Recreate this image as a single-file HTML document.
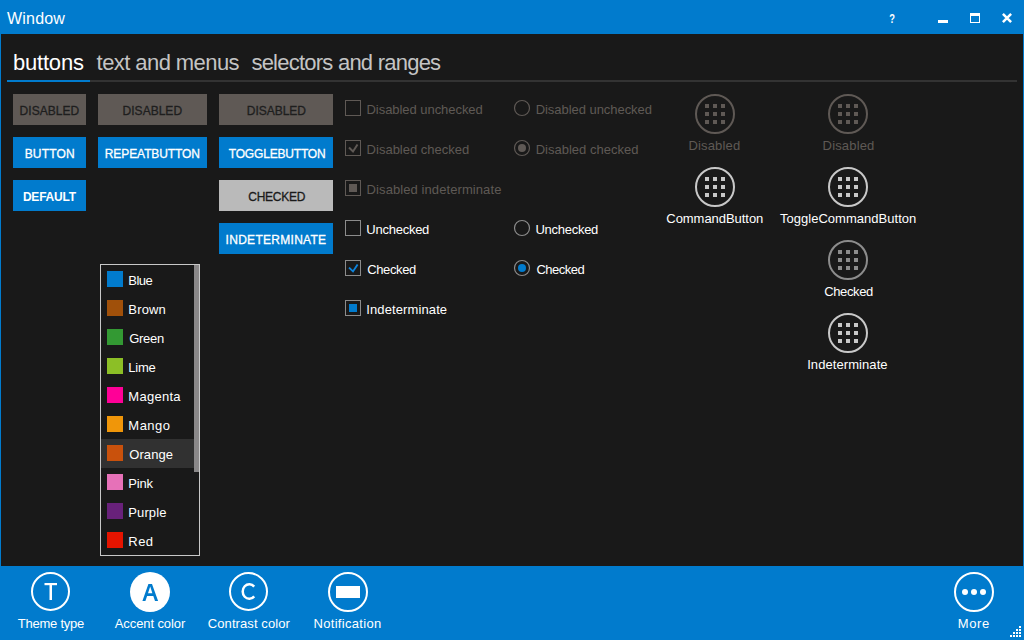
<!DOCTYPE html>
<html><head><meta charset="utf-8"><title>Window</title>
<style>
html,body{margin:0;padding:0;width:1024px;height:640px;overflow:hidden;background:#191919;}
.r{position:absolute;}
.t{position:absolute;white-space:nowrap;font-family:"Liberation Sans",sans-serif;}
svg{position:absolute;left:0;top:0;}
</style></head><body>
<div class="r" style="left:0px;top:0px;width:1024px;height:640px;background:#017bcd;"></div><div class="r" style="left:1px;top:34px;width:1022px;height:532px;background:#191919;"></div><div class="r" style="left:90px;top:80px;width:927px;height:2px;background:#333333;"></div><div class="r" style="left:7px;top:80px;width:83px;height:2px;background:#017bcd;"></div><div class="r" style="left:13px;top:94px;width:73px;height:31px;background:#5f5955;"></div><div class="r" style="left:98px;top:94px;width:109px;height:31px;background:#5f5955;"></div><div class="r" style="left:219px;top:94px;width:114px;height:31px;background:#5f5955;"></div><div class="r" style="left:13px;top:137px;width:73px;height:31px;background:#017bcd;"></div><div class="r" style="left:98px;top:137px;width:109px;height:31px;background:#017bcd;"></div><div class="r" style="left:219px;top:137px;width:114px;height:31px;background:#017bcd;"></div><div class="r" style="left:13px;top:180px;width:73px;height:31px;background:#017bcd;"></div><div class="r" style="left:219px;top:180px;width:114px;height:31px;background:#bababa;"></div><div class="r" style="left:219px;top:223px;width:114px;height:31px;background:#017bcd;"></div><div class="r" style="left:100px;top:264px;width:100px;height:292px;background:#c8c8c8;"></div><div class="r" style="left:101px;top:265px;width:98px;height:290px;background:#191919;"></div><div class="r" style="left:101px;top:439px;width:93px;height:29px;background:#313131;"></div><div class="r" style="left:194px;top:265px;width:5px;height:207px;background:#8a8889;"></div><div class="r" style="left:107px;top:271px;width:16px;height:16px;background:#017bcd;"></div><div class="r" style="left:107px;top:300px;width:16px;height:16px;background:#a0500a;"></div><div class="r" style="left:107px;top:329px;width:16px;height:16px;background:#339933;"></div><div class="r" style="left:107px;top:358px;width:16px;height:16px;background:#8cbf26;"></div><div class="r" style="left:107px;top:387px;width:16px;height:16px;background:#ff0097;"></div><div class="r" style="left:107px;top:416px;width:16px;height:16px;background:#f09609;"></div><div class="r" style="left:107px;top:445px;width:16px;height:16px;background:#c9510c;"></div><div class="r" style="left:107px;top:474px;width:16px;height:16px;background:#e671b8;"></div><div class="r" style="left:107px;top:503px;width:16px;height:16px;background:#68217a;"></div><div class="r" style="left:107px;top:532px;width:16px;height:16px;background:#e51400;"></div>
<svg width="1024" height="640" viewBox="0 0 1024 640">
<rect x="345.5" y="100.5" width="15" height="15" fill="none" stroke="#5f5955" stroke-width="1"/><rect x="345.5" y="140.5" width="15" height="15" fill="none" stroke="#5f5955" stroke-width="1"/><path d="M349 147.5 L353 151.5 L357.5 144.5" fill="none" stroke="#5f5955" stroke-width="2"/><rect x="345.5" y="180.5" width="15" height="15" fill="none" stroke="#5f5955" stroke-width="1"/><rect x="349" y="184" width="8" height="8" fill="#5f5955"/><rect x="345.5" y="220.5" width="15" height="15" fill="none" stroke="#8c8c8c" stroke-width="1"/><rect x="345.5" y="260.5" width="15" height="15" fill="none" stroke="#8c8c8c" stroke-width="1"/><path d="M349 267.6 L353 271.4 L357.6 264.4" fill="none" stroke="#0e84dc" stroke-width="1.9"/><rect x="345.5" y="300.5" width="15" height="15" fill="none" stroke="#8c8c8c" stroke-width="1"/><rect x="349" y="304" width="8" height="8" fill="#017bcd"/><circle cx="522" cy="108" r="7.5" fill="none" stroke="#5f5955" stroke-width="1.2"/><circle cx="522" cy="148" r="7.5" fill="none" stroke="#5f5955" stroke-width="1.2"/><circle cx="522" cy="148" r="4" fill="#5f5955"/><circle cx="522" cy="228" r="7.5" fill="none" stroke="#8c8c8c" stroke-width="1.2"/><circle cx="522" cy="268" r="7.5" fill="none" stroke="#8c8c8c" stroke-width="1.2"/><circle cx="522" cy="268" r="4" fill="#017bcd"/><circle cx="715" cy="114" r="19" fill="none" stroke="#5f5955" stroke-width="2"/><rect x="705" y="104" width="4" height="4" fill="#5f5955"/><rect x="705" y="112" width="4" height="4" fill="#5f5955"/><rect x="705" y="120" width="4" height="4" fill="#5f5955"/><rect x="713" y="104" width="4" height="4" fill="#5f5955"/><rect x="713" y="112" width="4" height="4" fill="#5f5955"/><rect x="713" y="120" width="4" height="4" fill="#5f5955"/><rect x="721" y="104" width="4" height="4" fill="#5f5955"/><rect x="721" y="112" width="4" height="4" fill="#5f5955"/><rect x="721" y="120" width="4" height="4" fill="#5f5955"/><circle cx="715" cy="187" r="19" fill="none" stroke="#c8c8c8" stroke-width="2"/><rect x="705" y="177" width="4" height="4" fill="#c8c8c8"/><rect x="705" y="185" width="4" height="4" fill="#c8c8c8"/><rect x="705" y="193" width="4" height="4" fill="#c8c8c8"/><rect x="713" y="177" width="4" height="4" fill="#c8c8c8"/><rect x="713" y="185" width="4" height="4" fill="#c8c8c8"/><rect x="713" y="193" width="4" height="4" fill="#c8c8c8"/><rect x="721" y="177" width="4" height="4" fill="#c8c8c8"/><rect x="721" y="185" width="4" height="4" fill="#c8c8c8"/><rect x="721" y="193" width="4" height="4" fill="#c8c8c8"/><circle cx="848" cy="114" r="19" fill="none" stroke="#5f5955" stroke-width="2"/><rect x="838" y="104" width="4" height="4" fill="#5f5955"/><rect x="838" y="112" width="4" height="4" fill="#5f5955"/><rect x="838" y="120" width="4" height="4" fill="#5f5955"/><rect x="846" y="104" width="4" height="4" fill="#5f5955"/><rect x="846" y="112" width="4" height="4" fill="#5f5955"/><rect x="846" y="120" width="4" height="4" fill="#5f5955"/><rect x="854" y="104" width="4" height="4" fill="#5f5955"/><rect x="854" y="112" width="4" height="4" fill="#5f5955"/><rect x="854" y="120" width="4" height="4" fill="#5f5955"/><circle cx="848" cy="187" r="19" fill="none" stroke="#c8c8c8" stroke-width="2"/><rect x="838" y="177" width="4" height="4" fill="#c8c8c8"/><rect x="838" y="185" width="4" height="4" fill="#c8c8c8"/><rect x="838" y="193" width="4" height="4" fill="#c8c8c8"/><rect x="846" y="177" width="4" height="4" fill="#c8c8c8"/><rect x="846" y="185" width="4" height="4" fill="#c8c8c8"/><rect x="846" y="193" width="4" height="4" fill="#c8c8c8"/><rect x="854" y="177" width="4" height="4" fill="#c8c8c8"/><rect x="854" y="185" width="4" height="4" fill="#c8c8c8"/><rect x="854" y="193" width="4" height="4" fill="#c8c8c8"/><circle cx="848" cy="260" r="19" fill="none" stroke="#8c8c8c" stroke-width="2"/><rect x="838" y="250" width="4" height="4" fill="#8c8c8c"/><rect x="838" y="258" width="4" height="4" fill="#8c8c8c"/><rect x="838" y="266" width="4" height="4" fill="#8c8c8c"/><rect x="846" y="250" width="4" height="4" fill="#8c8c8c"/><rect x="846" y="258" width="4" height="4" fill="#8c8c8c"/><rect x="846" y="266" width="4" height="4" fill="#8c8c8c"/><rect x="854" y="250" width="4" height="4" fill="#8c8c8c"/><rect x="854" y="258" width="4" height="4" fill="#8c8c8c"/><rect x="854" y="266" width="4" height="4" fill="#8c8c8c"/><circle cx="848" cy="333" r="19" fill="none" stroke="#c8c8c8" stroke-width="2"/><rect x="838" y="323" width="4" height="4" fill="#c8c8c8"/><rect x="838" y="331" width="4" height="4" fill="#c8c8c8"/><rect x="838" y="339" width="4" height="4" fill="#c8c8c8"/><rect x="846" y="323" width="4" height="4" fill="#c8c8c8"/><rect x="846" y="331" width="4" height="4" fill="#c8c8c8"/><rect x="846" y="339" width="4" height="4" fill="#c8c8c8"/><rect x="854" y="323" width="4" height="4" fill="#c8c8c8"/><rect x="854" y="331" width="4" height="4" fill="#c8c8c8"/><rect x="854" y="339" width="4" height="4" fill="#c8c8c8"/><text x="889.3" y="23" font-family="Liberation Sans" font-weight="700" font-size="12.5" fill="#fff" transform="translate(889.3 0) scale(0.75 1) translate(-889.3 0)">?</text><rect x="938" y="20" width="10" height="3" fill="#fff"/><rect x="970.5" y="13.5" width="9" height="9" fill="none" stroke="#fff" stroke-width="1"/><rect x="970" y="13" width="10" height="3" fill="#fff"/><path d="M1002.9 13.9 L1011.1 22.1 M1011.1 13.9 L1002.9 22.1" stroke="#fff" stroke-width="2.5"/><circle cx="50.5" cy="591.5" r="18.5" fill="none" stroke="#fff" stroke-width="2"/><rect x="44.5" y="583" width="12.5" height="2.2" fill="#fff"/><rect x="49.5" y="583" width="2.5" height="17" fill="#fff"/><circle cx="150" cy="592" r="20" fill="#fff"/><path fill-rule="evenodd" fill="#017bcd" d="M142.4 601 L148.4 584 L152 584 L158.1 601 L155 601 L153.3 596 L147.1 596 L145.4 601 Z M148 593.3 L152.4 593.3 L150.2 586.6 Z"/><circle cx="248.5" cy="591.5" r="18.5" fill="none" stroke="#fff" stroke-width="2"/><path d="M254.2 586.6 A6.6 7.3 0 1 0 254.2 596.4" fill="none" stroke="#fff" stroke-width="2.5"/><circle cx="348" cy="592" r="19" fill="none" stroke="#fff" stroke-width="2"/><rect x="336" y="586" width="24" height="12" fill="#fff"/><circle cx="974" cy="592" r="19" fill="none" stroke="#fff" stroke-width="2"/><circle cx="965" cy="592" r="3" fill="#fff"/><circle cx="974" cy="592" r="3" fill="#fff"/><circle cx="983" cy="592" r="3" fill="#fff"/><rect x="1019" y="626" width="2" height="2" fill="#fff"/><rect x="1016" y="629" width="2" height="2" fill="#fff"/><rect x="1019" y="629" width="2" height="2" fill="#fff"/><rect x="1013" y="632" width="2" height="2" fill="#fff"/><rect x="1016" y="632" width="2" height="2" fill="#fff"/><rect x="1019" y="632" width="2" height="2" fill="#fff"/><rect x="1010" y="635" width="2" height="2" fill="#fff"/><rect x="1013" y="635" width="2" height="2" fill="#fff"/><rect x="1016" y="635" width="2" height="2" fill="#fff"/><rect x="1019" y="635" width="2" height="2" fill="#fff"/>
</svg>
<div class="t" style="left:7.10px;top:-2.00px;font-size:16px;line-height:42px;font-weight:400;letter-spacing:0.160px;color:#ffffff;">Window</div><div class="t" style="left:12.90px;top:36.00px;font-size:22px;line-height:54px;font-weight:400;letter-spacing:-0.183px;color:#ffffff;">buttons</div><div class="t" style="left:96.60px;top:36.00px;font-size:22px;line-height:54px;font-weight:400;letter-spacing:-0.569px;color:#c4c4c4;">text and menus</div><div class="t" style="left:251.40px;top:36.00px;font-size:22px;line-height:54px;font-weight:400;letter-spacing:-0.763px;color:#c4c4c4;">selectors and ranges</div><div class="t" style="left:19.60px;top:94.00px;font-size:12px;line-height:34px;font-weight:400;letter-spacing:0.029px;color:#1e1e1e;-webkit-text-stroke:0.3px #1e1e1e;">DISABLED</div><div class="t" style="left:122.60px;top:94.00px;font-size:12px;line-height:34px;font-weight:400;letter-spacing:0.014px;color:#1e1e1e;-webkit-text-stroke:0.3px #1e1e1e;">DISABLED</div><div class="t" style="left:246.75px;top:94.00px;font-size:12px;line-height:34px;font-weight:400;letter-spacing:-0.021px;color:#1e1e1e;-webkit-text-stroke:0.3px #1e1e1e;">DISABLED</div><div class="t" style="left:24.70px;top:137.00px;font-size:12px;line-height:34px;font-weight:400;letter-spacing:0.180px;color:#ffffff;-webkit-text-stroke:0.3px #ffffff;">BUTTON</div><div class="t" style="left:104.80px;top:137.00px;font-size:12px;line-height:34px;font-weight:400;letter-spacing:-0.091px;color:#ffffff;-webkit-text-stroke:0.3px #ffffff;">REPEATBUTTON</div><div class="t" style="left:228.75px;top:137.00px;font-size:12px;line-height:34px;font-weight:400;letter-spacing:-0.182px;color:#ffffff;-webkit-text-stroke:0.3px #ffffff;">TOGGLEBUTTON</div><div class="t" style="left:22.90px;top:180.00px;font-size:12px;line-height:34px;font-weight:700;letter-spacing:-0.217px;color:#ffffff;">DEFAULT</div><div class="t" style="left:248.25px;top:180.00px;font-size:12px;line-height:34px;font-weight:400;letter-spacing:-0.250px;color:#1a1a1a;-webkit-text-stroke:0.3px #1a1a1a;">CHECKED</div><div class="t" style="left:225.60px;top:223.00px;font-size:12px;line-height:34px;font-weight:400;letter-spacing:0.283px;color:#ffffff;-webkit-text-stroke:0.3px #ffffff;">INDETERMINATE</div><div class="t" style="left:366.50px;top:92.00px;font-size:13px;line-height:36px;font-weight:400;letter-spacing:-0.047px;color:#5f5955;">Disabled unchecked</div><div class="t" style="left:366.60px;top:132.00px;font-size:13px;line-height:36px;font-weight:400;letter-spacing:0.007px;color:#5f5955;">Disabled checked</div><div class="t" style="left:366.60px;top:172.00px;font-size:13px;line-height:36px;font-weight:400;letter-spacing:0.086px;color:#5f5955;">Disabled indeterminate</div><div class="t" style="left:366.30px;top:212.00px;font-size:13px;line-height:36px;font-weight:400;letter-spacing:-0.250px;color:#ffffff;">Unchecked</div><div class="t" style="left:367.30px;top:252.00px;font-size:13px;line-height:36px;font-weight:400;letter-spacing:-0.400px;color:#ffffff;">Checked</div><div class="t" style="left:366.30px;top:292.00px;font-size:13px;line-height:36px;font-weight:400;letter-spacing:0.108px;color:#ffffff;">Indeterminate</div><div class="t" style="left:535.70px;top:92.00px;font-size:13px;line-height:36px;font-weight:400;letter-spacing:-0.047px;color:#5f5955;">Disabled unchecked</div><div class="t" style="left:535.70px;top:132.00px;font-size:13px;line-height:36px;font-weight:400;letter-spacing:0.007px;color:#5f5955;">Disabled checked</div><div class="t" style="left:535.50px;top:212.00px;font-size:13px;line-height:36px;font-weight:400;letter-spacing:-0.275px;color:#ffffff;">Unchecked</div><div class="t" style="left:536.50px;top:252.00px;font-size:13px;line-height:36px;font-weight:400;letter-spacing:-0.517px;color:#ffffff;">Checked</div><div class="t" style="left:688.40px;top:128.00px;font-size:13px;line-height:36px;font-weight:400;letter-spacing:0.171px;color:#5f5955;">Disabled</div><div class="t" style="left:822.60px;top:128.00px;font-size:13px;line-height:36px;font-weight:400;letter-spacing:0.164px;color:#5f5955;">Disabled</div><div class="t" style="left:666.30px;top:201.00px;font-size:13px;line-height:36px;font-weight:400;letter-spacing:-0.042px;color:#ffffff;">CommandButton</div><div class="t" style="left:779.90px;top:201.00px;font-size:13px;line-height:36px;font-weight:400;letter-spacing:0.033px;color:#ffffff;">ToggleCommandButton</div><div class="t" style="left:824.15px;top:274.00px;font-size:13px;line-height:36px;font-weight:400;letter-spacing:-0.358px;color:#ffffff;">Checked</div><div class="t" style="left:807.20px;top:347.00px;font-size:13px;line-height:36px;font-weight:400;letter-spacing:0.075px;color:#ffffff;">Indeterminate</div><div class="t" style="left:128.30px;top:263.00px;font-size:13px;line-height:36px;font-weight:400;letter-spacing:-0.567px;color:#ffffff;">Blue</div><div class="t" style="left:128.30px;top:292.00px;font-size:13px;line-height:36px;font-weight:400;letter-spacing:0.175px;color:#ffffff;">Brown</div><div class="t" style="left:129.30px;top:321.00px;font-size:13px;line-height:36px;font-weight:400;letter-spacing:-0.325px;color:#ffffff;">Green</div><div class="t" style="left:128.30px;top:350.00px;font-size:13px;line-height:36px;font-weight:400;letter-spacing:-0.233px;color:#ffffff;">Lime</div><div class="t" style="left:128.30px;top:379.00px;font-size:13px;line-height:36px;font-weight:400;letter-spacing:0.283px;color:#ffffff;">Magenta</div><div class="t" style="left:128.30px;top:408.00px;font-size:13px;line-height:36px;font-weight:400;letter-spacing:0.500px;color:#ffffff;">Mango</div><div class="t" style="left:129.30px;top:437.00px;font-size:13px;line-height:36px;font-weight:400;letter-spacing:0.060px;color:#ffffff;">Orange</div><div class="t" style="left:128.30px;top:466.00px;font-size:13px;line-height:36px;font-weight:400;letter-spacing:-0.233px;color:#ffffff;">Pink</div><div class="t" style="left:128.30px;top:495.00px;font-size:13px;line-height:36px;font-weight:400;letter-spacing:0.100px;color:#ffffff;">Purple</div><div class="t" style="left:128.30px;top:524.00px;font-size:13px;line-height:36px;font-weight:400;letter-spacing:0.450px;color:#ffffff;">Red</div><div class="t" style="left:17.80px;top:606.00px;font-size:13px;line-height:36px;font-weight:400;letter-spacing:-0.244px;color:#ffffff;">Theme type</div><div class="t" style="left:114.80px;top:606.00px;font-size:13px;line-height:36px;font-weight:400;letter-spacing:-0.100px;color:#ffffff;">Accent color</div><div class="t" style="left:207.80px;top:606.00px;font-size:13px;line-height:36px;font-weight:400;letter-spacing:0.092px;color:#ffffff;">Contrast color</div><div class="t" style="left:313.50px;top:606.00px;font-size:13px;line-height:36px;font-weight:400;letter-spacing:0.309px;color:#ffffff;">Notification</div><div class="t" style="left:957.75px;top:606.00px;font-size:13px;line-height:36px;font-weight:400;letter-spacing:0.617px;color:#ffffff;">More</div>
</body></html>
